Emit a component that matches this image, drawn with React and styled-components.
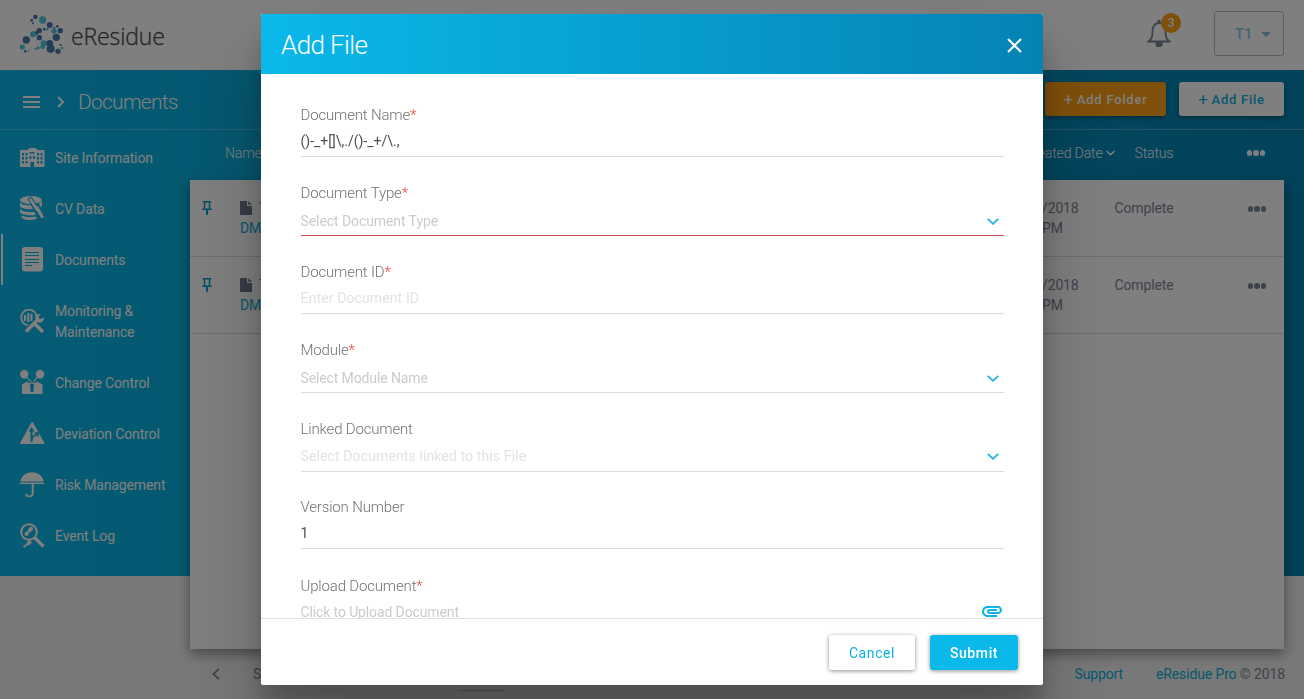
import React from "react";
import styled, { createGlobalStyle } from "styled-components";

const Global = createGlobalStyle`
  * { box-sizing: border-box; }
  html, body { margin: 0; height: 699px; overflow: hidden; }
  body { font-family: Roboto, "Liberation Sans", sans-serif; font-size: 14px; color: #7d8797; background: #f1f1f1; letter-spacing: -0.13px; }
  button { font-family: inherit; }
`;

const Page = styled.div`
  width: 1304px;
  height: 699px;
  display: flex;
  flex-direction: column;
  background: #f1f1f1;
`;

const TopBar = styled.header`
  height: 70px;
  flex: none;
  display: flex;
  align-items: center;
  justify-content: space-between;
  padding: 0 20px 0 19px;
  background: #fff;
`;

const Brand = styled.div`
  display: flex;
  align-items: center;
  gap: 6px;
`;

const BrandName = styled.span`
  font-family: "Open Sans", "Noto Sans", sans-serif;
  font-weight: 300;
  font-size: 23px;
  line-height: 32px;
  letter-spacing: -0.13px;
  color: #4c4c50;
  -webkit-text-stroke: 0.3px #4c4c50;
  padding-top: 2px;
`;

const Account = styled.div`
  display: flex;
  align-items: flex-start;
  gap: 32px;
  height: 48px;
`;

const Bell = styled.div`
  position: relative;
  width: 35px;
  height: 45px;
`;

const Badge = styled.span`
  position: absolute;
  left: 14px;
  top: 2px;
  width: 20px;
  height: 20px;
  border-radius: 50%;
  background: #ffa012;
  color: #fff;
  font-size: 12px;
  font-weight: 500;
  line-height: 20px;
  text-align: center;
`;

const UserSelect = styled.div`
  width: 70px;
  height: 45px;
  border: 1px solid #b4bccb;
  border-radius: 3px;
  display: flex;
  align-items: center;
  gap: 9px;
  padding-left: 20px;
  color: #86cde2;
  font-size: 15px;
  font-weight: 500;
`;

const Caret = styled.span`
  border: 5px solid transparent;
  border-top-color: #7fc4da;
  border-bottom: 0;
  margin-top: 2px;
`;

const Content = styled.div`
  flex: 1;
  display: flex;
  flex-direction: column;
  background: linear-gradient(90deg, #0ab9ea, #0483b3) top / 100% 506px no-repeat;
`;

const TitleBar = styled.div`
  height: 60px;
  flex: none;
  display: flex;
  align-items: center;
  border-bottom: 1px solid rgba(255, 255, 255, 0.25);
  padding: 0 20px 1px 22px;
  color: #fff;
`;

const Trail = styled.svg`
  margin-top: 5px;
`;

const PageTitle = styled.h1`
  flex: 1;
  margin: 5px 0 0 13px;
  font-size: 21px;
  font-weight: 300;
  letter-spacing: -0.75px;
`;

const Action = styled.button`
  width: ${(p) => p.$width}px;
  height: 34px;
  margin-left: 13px;
  border: 0;
  border-radius: 3px;
  background: ${(p) => (p.$accent ? "#ffa012" : "#fff")};
  color: ${(p) => (p.$accent ? "#fff" : "#0ab0dd")};
  font-size: 13px;
  font-weight: 500;
  letter-spacing: 0.75px;
  padding: 0;
  display: flex;
  align-items: center;
  justify-content: center;
  gap: 3px;
  box-shadow: 0 2px 4px rgba(0, 0, 0, 0.35);
`;

const Plus = styled.span`
  font-size: 17px;
  font-weight: 400;
  line-height: 15px;
`;

const Columns = styled.div`
  flex: 1;
  display: flex;
`;

const Sidebar = styled.nav`
  width: 190px;
  flex: none;
  padding-top: 2px;
`;

const NavItem = styled.div`
  height: ${(p) => (p.$tall ? 72 : 51)}px;
  margin-left: 1px;
  padding-left: 19px;
  display: flex;
  align-items: center;
  gap: 10px;
  color: #fff;
  box-shadow: ${(p) => (p.$active ? "inset 2px 0 #fff" : "none")};
`;

const NavText = styled.span`
  padding-top: 2px;
  font-size: 14px;
  line-height: 21px;
  white-space: pre-line;
`;

const Main = styled.main`
  flex: 1;
  padding-right: 20px;
`;

const HeadRow = styled.div`
  height: 50px;
  display: flex;
  align-items: center;
  padding: 0 19px 4px 35px;
  color: #fff;
  font-weight: 300;
  font-size: 14px;
`;

const StatusHead = styled.span`
  margin-left: 20px;
`;

const Card = styled.div`
  height: 469px;
  background: #fff;
  box-shadow: 0 5px 12px rgba(0, 0, 0, 0.4);
`;

const Row = styled.div`
  height: 77px;
  border-bottom: 1px solid #dcdcdc;
  display: flex;
  align-items: flex-start;
  padding: 18px 18px 0 11px;
  line-height: 20px;
`;

const PinBox = styled.span`
  display: flex;
  margin: 3px 0 0 1px;
`;

const Cell = styled.div`
  width: ${(p) => (p.$width ? p.$width + "px" : "auto")};
  flex: ${(p) => (p.$grow ? 1 : "none")};
  display: flex;
  flex-direction: ${(p) => (p.$stack ? "column" : "row")};
  align-items: ${(p) => (p.$stack ? "flex-start" : "center")};
  gap: ${(p) => p.$gap || 0}px;
`;

const Link = styled.span`
  color: #0ab0dd;
`;

const Dots = styled.span`
  display: flex;
  gap: 1px;
  margin-top: ${(p) => p.$top || 0}px;
  &::before, &::after, i { content: ""; width: 5.5px; height: 5.5px; border-radius: 50%; background: currentColor; }
`;

const Footer = styled.footer`
  height: 50px;
  display: flex;
  align-items: center;
  padding: 0 0 1px 22px;
  margin-right: -1px;
`;

const Pager = styled.div`
  flex: 1;
  display: flex;
  align-items: center;
  gap: 33px;
`;

const PageInput = styled.span`
  width: 46px;
  height: 34px;
  margin-left: 164px;
  border-bottom: 1px solid #bdbdbd;
`;

const Overlay = styled.div`
  position: fixed;
  inset: 0;
  background: rgba(0, 0, 0, 0.5);
  display: flex;
  justify-content: center;
  align-items: flex-start;
  padding-top: 14px;
`;

const Dialog = styled.section`
  width: 782px;
  height: 671px;
  display: flex;
  flex-direction: column;
  background: #fff;
  border-radius: 2px;
  overflow: hidden;
  box-shadow: 0 27px 24px 0 rgba(0, 0, 0, 0.2), 0 40px 77px 0 rgba(0, 0, 0, 0.22);
`;

const DialogHead = styled.div`
  height: 60px;
  flex: none;
  display: flex;
  align-items: center;
  justify-content: space-between;
  padding: 0 21px 0 20px;
  background: linear-gradient(90deg, #0ab9ea, #0483b3);
  color: #fff;
`;

const CloseIcon = styled.svg`
  margin-top: 3px;
`;

const DialogTitle = styled.h2`
  margin: 2px 0 0;
  font-size: 26px;
  font-weight: 300;
  letter-spacing: -0.6px;
`;

const DialogBody = styled.div`
  flex: 1;
  overflow: hidden;
  padding: 31px 39px 0 39.5px;
`;

const Field = styled.div`
  height: ${(p) => (p.$select ? 53 : 52)}px;
  margin-bottom: ${(p) => p.$gap}px;
  border-bottom: 1px solid ${(p) => (p.$error ? "#d0564c" : "#d9dbdf")};
`;

const Label = styled.label`
  display: block;
  height: 20px;
  line-height: 20px;
  font-size: 15px;
  font-weight: 300;
  letter-spacing: -0.17px;
  color: #727272;
`;

const Required = styled.span`
  color: #f44336;
`;

const Control = styled.div`
  height: 20px;
  margin-top: ${(p) => p.$offset}px;
  display: flex;
  align-items: center;
  justify-content: space-between;
  font-size: 14px;
  letter-spacing: ${(p) => p.$spacing}px;
  color: ${(p) => p.$color};
  padding-right: ${(p) => (p.$select ? 5 : 0)}px;
`;

const DialogFoot = styled.div`
  height: 67px;
  flex: none;
  border-top: 1px solid #e2e2e2;
  display: flex;
  justify-content: flex-end;
  gap: 15px;
  padding: 16px 25px 0 0;
`;

const DialogButton = styled.button`
  width: ${(p) => (p.$primary ? 88 : 86)}px;
  height: 35px;
  border: 0;
  border-radius: 3px;
  background: ${(p) => (p.$primary ? "#0ab8ea" : "#fff")};
  color: ${(p) => (p.$primary ? "#fff" : "#0ab0e0")};
  font-size: 14px;
  font-weight: ${(p) => (p.$primary ? 500 : 400)};
  letter-spacing: 0.6px;
  padding: 0;
  box-shadow: 0 1px 4px rgba(0, 0, 0, 0.45);
`;

const NAVY = "#4878b0";
const TEAL = "#4fcbdc";
const LOGO = [
  [106, 52, 7, 0], [95, 62, 4, 0], [99, 71, 3, 0], [128, 61, 11, 1], [149, 76, 9, 0], [172, 80, 4, 0],
  [163, 84, 3, 0], [142, 88, 4, 1], [133, 89, 4, 0], [118, 93, 8, 0], [162, 94, 8, 1], [181, 93, 8, 0],
  [109, 100, 6, 0], [99, 104, 9, 1], [169, 113, 11, 0], [118, 114, 8, 0], [79, 121, 11, 0], [131, 131, 9, 1],
  [149, 131, 10, 0], [67, 142, 8, 1], [128, 141, 7, 1], [152, 147, 12, 0], [174, 155, 8, 0], [182, 136, 3, 0],
  [186, 145, 4, 1], [76, 155, 4, 0], [86, 153, 2.5, 1], [106, 148, 3, 1], [114, 145, 5, 1],
];

const Logo = () => (
  <svg width="46" height="44" viewBox="57 40 138 132">
    {LOGO.map(([x, y, r, t], i) => <circle key={i} cx={x} cy={y} r={r} fill={t ? TEAL : NAVY} />)}
  </svg>
);

const Glyph = styled.svg`
  flex: none;
`;

const Icon = ({ children, size = 24, width, box = "0 0 24 24" }) => (
  <Glyph width={width || size} height={size} viewBox={box} fill="none">{children}</Glyph>
);

const W = "#fff";
const B = "#0ab4e4";

const icons = {
  site: (
    <g>
      <path fill={W} d="M0 5h8V4l2-1h5l2 1v1h7.500v17H14v-5h-3.500v5H0z" />
      <path fill={B} d="M2 8h2v2.500H2zM5.500 8h2v2.500h-2zM2 12h2v2.500H2zM5.500 12h2v2.500h-2zM2 16h2v2.500H2zM5.500 16h2v2.500h-2zM17 8h2v2.500h-2zM20.500 8h2v2.500h-2zM17 12h2v2.500h-2zM20.500 12h2v2.500h-2zM17 16h2v2.500h-2zM20.500 16h2v2.500h-2zM9.500 7h5v1.500h-5zM9.500 11h1.800v3H9.500zM13.200 11H15v3h-1.800z" />
    </g>
  ),
  data: (
    <g>
      <ellipse cx="11" cy="4" rx="11" ry="4" fill={W} />
      <path fill={W} d="M0 6c2 3 7 3.500 11 3.300L13 13C7 13.500 2 13 0 10.500zM0 13c2 2.500 8 3.500 14 2.700l2 3C10 20 2 19 0 16.500zM1.500 19.500c4 2 10 2.300 14.500 1l1 2C12 25 4 24.500 1.500 21.500zM19 7c2-.5 3-1.300 3-2v5l-2 1z" />
      <path stroke={B} strokeWidth="5" strokeLinecap="round" d="M10.500 3.500L20.500 19" />
      <path stroke={W} strokeWidth="3" strokeLinecap="round" d="M10.500 3.500L17 13.500" />
      <path fill={W} d="M14.500 11l3.500-1 6 11-2.500 1.500z" />
    </g>
  ),
  docs: (
    <g>
      <rect x="2" y="0" width="21" height="24.500" rx="3" fill={W} />
      <path stroke={B} strokeWidth="1.100" d="M5 5.500h14M5 8.500h14M5 12.500h14M5 15.500h14M5 18.500h7" />
    </g>
  ),
  monitor: (
    <g stroke={W}>
      <circle cx="9" cy="8.500" r="7.800" strokeWidth="1.800" />
      <path strokeWidth="2" d="M5 6v6M8.300 4v9M11.500 5v7" />
      <path stroke={B} strokeWidth="6" d="M5 23L20 9" />
      <path strokeWidth="3.600" strokeLinecap="round" d="M7 21.500L17.500 11M15 15l7 7" />
      <path fill={W} stroke="none" d="M15 9c0-3 3-4.500 5.500-3.500L18.500 8l1.500 2.200 3.800-1.700c.5 3-2 5.500-5 5z" />
    </g>
  ),
  change: (
    <g>
      <circle cx="4.200" cy="4.200" r="4.200" fill={W} />
      <circle cx="20" cy="4.200" r="4.200" fill={W} />
      <path stroke={W} strokeWidth="1.600" strokeDasharray="1.500 .6" d="M6.500 7l5 5.500M17.500 7l-4.500 5.500" />
      <path fill={W} d="M2 14.500l5-3 2 1.500h6l2-1.500 5.500 3V24H2z" />
      <path fill={B} d="M12 13.500a2.300 2.300 0 0 1 1.500 4V22h-3v-4.500a2.300 2.300 0 0 1 1.500-4z" />
    </g>
  ),
  deviation: (
    <g>
      <path fill={W} stroke={W} strokeWidth="2" strokeLinejoin="round" d="M12.200 2L1.300 22h22z" />
      <path fill={B} d="M11.500 6l3 4.500h-2V21h-2V10.500h-2z" />
      <path stroke={B} strokeWidth="1.500" d="M12.500 18.500V16l4.500-2.700M14.500 12h3.500v3.500" />
    </g>
  ),
  risk: (
    <g>
      <path fill={W} d="M.3 9.500C1.500 3.500 6.500.3 12 .3s10.500 3.200 11.700 9.200z" />
      <path stroke={W} strokeWidth="1.600" d="M0 11.300h24" />
      <path stroke={W} strokeWidth="2" d="M12.700 12v9a3.300 3.300 0 0 1-6.600.8" />
    </g>
  ),
  log: (
    <g>
      <circle cx="9" cy="9" r="7.800" stroke={W} strokeWidth="2" />
      <path stroke={W} strokeWidth="3.400" d="M14.500 14.500l9 9" />
      <path stroke={W} strokeWidth="4" strokeLinecap="round" d="M11 5.800l-1 1.400M6.800 10.500L6.500 11M9.500 19.500l-1 .8" />
      <path stroke={W} strokeWidth="2" d="M12.500 4.500L6 11.500M11 18.500L3.500 24" />
    </g>
  ),
};

const NAV = [
  ["site", "Site Information"],
  ["data", "CV Data"],
  ["docs", "Documents"],
  ["monitor", "Monitoring &\nMaintenance"],
  ["change", "Change Control"],
  ["deviation", "Deviation Control"],
  ["risk", "Risk Management"],
  ["log", "Event Log"],
];

const Pin = () => (
  <Icon size={14} width={10} box="0 0 10 14">
    <path stroke="#0a9fcb" strokeWidth="1.500" d="M.8.800h8.400M2.500 1v7M7.500 1v7M.2 8.300h9.600" />
    <path stroke="#0a9fcb" strokeWidth="2" d="M5 9v4.800" />
  </Icon>
);

const FileIcon = () => (
  <Icon size={14} width={12} box="0 0 12 14">
    <path fill="#6f7a8c" d="M0 0h7v5h5v9H0zM8.200 0L12 3.800H8.200z" />
  </Icon>
);

const Chevron = ({ width = 12, height = 7, color, stroke = 1.8 }) => (
  <svg width={width} height={height} viewBox="0 0 12 7"><path d="M.8.8L6 5.800 11.200.8" fill="none" stroke={color} strokeWidth={stroke} /></svg>
);

const More = ({ top }) => <Dots $top={top}><i /></Dots>;

const FIELDS = [
  { label: "Document Name", required: true, gap: 26, spacing: 0, value: "()-_+[]\\,./()-_+/\\.,", color: "#4f4f4f" },
  { label: "Document Type", required: true, select: true, error: true, gap: 26, offset: 8, spacing: -0.08, value: "Select Document Type", color: "#cbcbcb" },
  { label: "Document ID", required: true, gap: 26, spacing: 0.12, value: "Enter Document ID", color: "#e3e3e3" },
  { label: "Module", required: true, select: true, gap: 26, offset: 8, value: "Select Module Name", color: "#cbcbcb" },
  { label: "Linked Document", select: true, gap: 25, offset: 7, spacing: 0.12, value: "Select Documents linked to this File", color: "#e3e3e3" },
  { label: "Version Number", gap: 27, value: "1", color: "#4f4f4f" },
  { label: "Upload Document", required: true, gap: 26, attach: true, value: "Click to Upload Document", color: "#cbcbcb" },
];

const FormField = ({ label, required, select, error, attach, value, color, gap, offset = 6, spacing = -0.12 }) => (
  <Field $select={select} $error={error} $gap={gap}>
    <Label>{label}{required && <Required>*</Required>}</Label>
    <Control $select={select} $color={color} $offset={offset} $spacing={spacing}>
      {value}
      {select && <Chevron color="#1fb2e6" />}
      {attach && (
        <Icon box="0 1 24 24">
          <path fill="#0ab4e4" d="M2 12.500C2 9.460 4.460 7 7.500 7H18c2.210 0 4 1.790 4 4s-1.790 4-4 4H9.500C8.120 15 7 13.880 7 12.500S8.120 10 9.500 10H17v2H9.410c-.55 0-.55 1 0 1H18c1.100 0 2-.9 2-2s-.9-2-2-2H7.500C5.570 9 4 10.570 4 12.500S5.570 16 7.500 16H17v2H7.500C4.460 18 2 15.540 2 12.500z" />
        </Icon>
      )}
    </Control>
  </Field>
);

export default function App() {
  return (
    <>
      <Global />
      <Page>
        <TopBar>
          <Brand><Logo /><BrandName>eResidue</BrandName></Brand>
          <Account>
            <Bell>
              <svg width="24" height="36" viewBox="0 1 24 36" fill="none" stroke="#7d8797" strokeWidth="1.800">
                <path d="M1.500 31.500c3-2.500 4-4 4-9.500 0-6 2-9 6.500-9s6.500 3 6.500 9c0 5.500 1 7 4 9.500z" />
                <path fill="#7d8797" stroke="none" d="M8.500 32h7a3.500 3.500 0 0 1-7 3zM10.500 10h3v3h-3z" />
              </svg>
              <Badge>3</Badge>
            </Bell>
            <UserSelect>T1<Caret /></UserSelect>
          </Account>
        </TopBar>
        <Content>
          <TitleBar>
            <Trail width="43" height="14" viewBox="0 0 43 14" fill="none" stroke="#fff" strokeWidth="2">
              <path d="M1 2h17M1 7h17M1 12h17M36 2l5 5-5 5" />
            </Trail>
            <PageTitle>Documents</PageTitle>
            <Action $accent $width={121}><Plus>+</Plus>Add Folder</Action>
            <Action $width={105}><Plus>+</Plus>Add File</Action>
          </TitleBar>
          <Columns>
            <Sidebar>
              {NAV.map(([key, text]) => (
                <NavItem key={key} $tall={text.includes("\n")} $active={key === "docs"}>
                  <Icon size={25} box="0 0 25 25">{icons[key]}</Icon>
                  <NavText>{text}</NavText>
                </NavItem>
              ))}
            </Sidebar>
            <Main>
              <HeadRow>
                <Cell $grow>Name</Cell>
                <Cell $gap={3}>Created Date<Chevron width={9} height={6} color="#fff" /></Cell>
                <Cell $width={132}><StatusHead>Status</StatusHead></Cell>
                <More />
              </HeadRow>
              <Card>
                {[0, 1].map((row) => (
                  <Row key={row}>
                    <Cell $width={39}><PinBox><Pin /></PinBox></Cell>
                    <Cell $grow $stack>
                      <Cell $gap={7}><FileIcon />T</Cell>
                      <Link>DM</Link>
                    </Cell>
                    <Cell $width={72.5} $stack><span>/2018</span><span>PM</span></Cell>
                    <Cell $width={133}>Complete</Cell>
                    <More top={8} />
                  </Row>
                ))}
              </Card>
              <Footer>
                <Pager>
                  <svg width="8" height="12" viewBox="0 0 8 12" fill="none" stroke="#7d7d7d" strokeWidth="1.700"><path d="M7 .8L1.500 6 7 11.200" /></svg>
                  <span>S</span>
                  <PageInput />
                </Pager>
                <Cell $gap={33}><Link>Support</Link><span><Link>eResidue Pro</Link> © 2018</span></Cell>
              </Footer>
            </Main>
          </Columns>
        </Content>
      </Page>
      <Overlay>
        <Dialog>
          <DialogHead>
            <DialogTitle>Add File</DialogTitle>
            <CloseIcon width="15" height="15" viewBox="0 0 15 15" stroke="#fff" strokeWidth="2.200"><path d="M1 1l13 13M14 1L1 14" /></CloseIcon>
          </DialogHead>
          <DialogBody>{FIELDS.map((f) => <FormField key={f.label} {...f} />)}</DialogBody>
          <DialogFoot>
            <DialogButton>Cancel</DialogButton>
            <DialogButton $primary>Submit</DialogButton>
          </DialogFoot>
        </Dialog>
      </Overlay>
    </>
  );
}
